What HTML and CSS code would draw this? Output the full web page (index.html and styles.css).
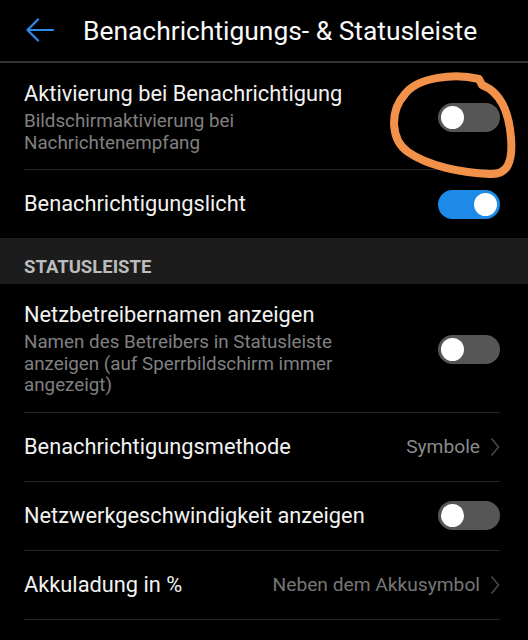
FILE: index.html
```html
<!DOCTYPE html>
<html lang="de">
<head>
  <meta charset="UTF-8" />
  <title>Benachrichtigungs- &amp; Statusleiste</title>
  <link rel="stylesheet" href="styles.css">
</head>
<body>
  <div class="topbar">
    <svg class="back" width="28" height="24" viewBox="0 0 28 24">
      <path d="M27 12H2M12 1.5L1.5 12L12 22.5" fill="none" stroke="#2f8be6" stroke-width="2.2" stroke-linecap="round" stroke-linejoin="round"/>
    </svg>
    <h1>Benachrichtigungs- &amp; Statusleiste</h1>
  </div>

  <div class="list">
    <div class="row tall">
      <div class="text">
        <div class="title">Aktivierung bei Benachrichtigung</div>
        <div class="sub">Bildschirmaktivierung bei<br>Nachrichtenempfang</div>
      </div>
      <div class="switch"><span class="knob"></span></div>
    </div>
    <div class="row last">
      <div class="title">Benachrichtigungslicht</div>
      <div class="switch on"><span class="knob"></span></div>
    </div>
  </div>

  <div class="section">STATUSLEISTE</div>

  <div class="list">
    <div class="row tall">
      <div class="text">
        <div class="title">Netzbetreibernamen anzeigen</div>
        <div class="sub">Namen des Betreibers in Statusleiste<br>anzeigen (auf Sperrbildschirm immer<br>angezeigt)</div>
      </div>
      <div class="switch"><span class="knob"></span></div>
    </div>
    <div class="row">
      <div class="title">Benachrichtigungsmethode</div>
      <div class="value">Symbole
        <svg width="10" height="20" viewBox="0 0 10 20"><polyline points="1.5,1.5 8.5,10 1.5,18.5" fill="none" stroke="#4a4a4a" stroke-width="1.5"/></svg>
      </div>
    </div>
    <div class="row">
      <div class="title">Netzwerkgeschwindigkeit anzeigen</div>
      <div class="switch"><span class="knob"></span></div>
    </div>
    <div class="row">
      <div class="title">Akkuladung in %</div>
      <div class="value dim">Neben dem Akkusymbol
        <svg width="10" height="20" viewBox="0 0 10 20"><polyline points="1.5,1.5 8.5,10 1.5,18.5" fill="none" stroke="#4a4a4a" stroke-width="1.5"/></svg>
      </div>
    </div>
  </div>

  <!-- hand drawn marker over the first switch -->
  <svg class="marker" width="528" height="640" viewBox="0 0 528 640">
    <path d="M405 94 C418 77 455 73 479 79 L482 85 C500 92 509 112 511 138 C513 163 507 175 490 174 C462 173 428 166 408 152 C391 140 389 112 405 94 Z" fill="none" stroke="#f2924a" stroke-width="8" stroke-linejoin="round"/>
  </svg>
</body>
</html>
```

FILE: styles.css
```css
body {
  margin: 0;
  background: #000;
  color: #f2f2f2;
  font-family: Roboto, 'Noto Sans', sans-serif;
  width: 528px;
  height: 640px;
  overflow: hidden;
  position: relative;
}

.topbar {
  display: flex;
  align-items: center;
  height: 61px;
  padding-left: 26px;
  border-bottom: 2px solid #333;
}

.back {
  margin-top: -2px;
}

.topbar h1 {
  margin: 0 0 0 29px;
  font-size: 26.4px;
  font-weight: 400;
  color: #fafafa;
}

.list {
  padding: 0 28px 0 24px;
}

.row {
  display: flex;
  align-items: center;
  justify-content: space-between;
  height: 68px;
  border-bottom: 1px solid #262626;
}

.row.tall {
  height: auto;
  padding: 18px 0 15px;
}

.row.last {
  border-bottom: none;
}

.title {
  font-size: 21.8px;
  line-height: 26px;
}

.sub {
  margin-top: 4px;
  font-size: 18.8px;
  line-height: 21.5px;
  color: #808080;
}

.section {
  height: 46px;
  box-sizing: border-box;
  padding: 12px 0 0 24px;
  line-height: 34px;
  background: #1c1c1c;
  color: #bcbcbc;
  font-size: 18.5px;
  font-weight: 700;
}

.switch {
  display: flex;
  align-items: center;
  box-sizing: border-box;
  width: 62px;
  height: 29px;
  padding: 0 3px;
  border-radius: 15px;
  background: #565656;
}

.switch.on {
  justify-content: flex-end;
  background: #1c8ae6;
}

.knob {
  width: 23px;
  height: 23px;
  border-radius: 50%;
  background: #fff;
}

.value {
  display: flex;
  align-items: center;
  gap: 10px;
  font-size: 19.2px;
  color: #8a8a8a;
}

.value.dim {
  color: #767676;
}

.marker {
  position: absolute;
  top: 0;
  left: 0;
  pointer-events: none;
}
```
